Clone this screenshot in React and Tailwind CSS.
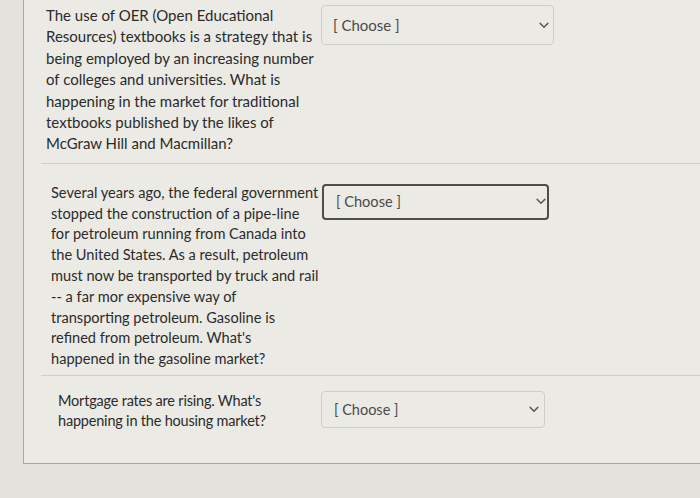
import React from "react";

function Chevron({ className = "" }) {
  return (
    <svg width="10" height="7" viewBox="0 0 10 7" className={className} fill="none">
      <path d="M1.2 1.4 L5 5.2 L8.8 1.4" stroke="#5b5b5b" strokeWidth="1.5" strokeLinecap="round" strokeLinejoin="round" />
    </svg>
  );
}

function Lines({ lines }) {
  return lines.map((l, i) => (
    <div key={i} className="whitespace-nowrap">
      {l}
    </div>
  ));
}

export default function App() {
  return (
    <div
      className="w-[700px] h-[498px] overflow-hidden bg-[#e4e2dd]"
      style={{ fontFamily: "Lato, 'Open Sans', sans-serif" }}
    >
      <div className="ml-[23px] h-[464px] w-[720px] border-l border-b border-[#a9a7a2] bg-[#ebeae5] text-[#2b2b2b]">
        {/* Section 1 */}
        <div className="ml-[17px] flex items-start border-b border-[#cfcdc8] pb-[8px] pt-[5px] pl-[5px]">
          <div className="w-[275px] text-[15px] leading-[21.4px]">
            <Lines
              lines={[
                "The use of OER (Open Educational",
                "Resources) textbooks is a strategy that is",
                "being employed by an increasing number",
                "of colleges and universities. What is",
                "happening in the market for traditional",
                "textbooks published by the likes of",
                "McGraw Hill and Macmillan?",
              ]}
            />
          </div>
          <div className="flex h-[40px] w-[233px] items-center justify-between rounded-[4px] border border-[#cfcdc8] pl-[11px] pr-[4px] text-[15px] text-[#4a4a4a]">
            <span>[ Choose ]</span>
            <Chevron />
          </div>
        </div>

        {/* Section 2 */}
        <div className="ml-[17px] flex items-start border-b border-[#cfcdc8] pb-[5px] pt-[19px] pl-[10px]">
          <div className="w-[271px] text-[14.6px] leading-[20.8px]">
            <Lines
              lines={[
                "Several years ago, the federal government",
                "stopped the construction of a pipe-line",
                "for petroleum running from Canada into",
                "the United States. As a result, petroleum",
                "must now be transported by truck and rail",
                "-- a far mor expensive way of",
                "transporting petroleum. Gasoline is",
                "refined from petroleum. What's",
                "happened in the gasoline market?",
              ]}
            />
          </div>
          <div className="mt-[1px] flex h-[36px] w-[227px] items-center justify-between rounded-[4px] border-2 border-[#4d4d4d] pl-[12px] pr-[1px] text-[14.6px] text-[#4a4a4a]">
            <span>[ Choose ]</span>
            <Chevron />
          </div>
        </div>

        {/* Section 3 */}
        <div className="ml-[17px] flex items-start pt-[15px] pl-[17px]">
          <div className="w-[263px] text-[14.5px] leading-[20px] tracking-[-0.2px]">
            <Lines lines={["Mortgage rates are rising. What's", "happening in the housing market?"]} />
          </div>
          <div className="flex h-[37px] w-[224px] items-center justify-between rounded-[4px] border border-[#cfcdc8] pl-[12px] pr-[5px] text-[14.5px] text-[#4a4a4a]">
            <span>[ Choose ]</span>
            <Chevron />
          </div>
        </div>
      </div>
    </div>
  );
}
